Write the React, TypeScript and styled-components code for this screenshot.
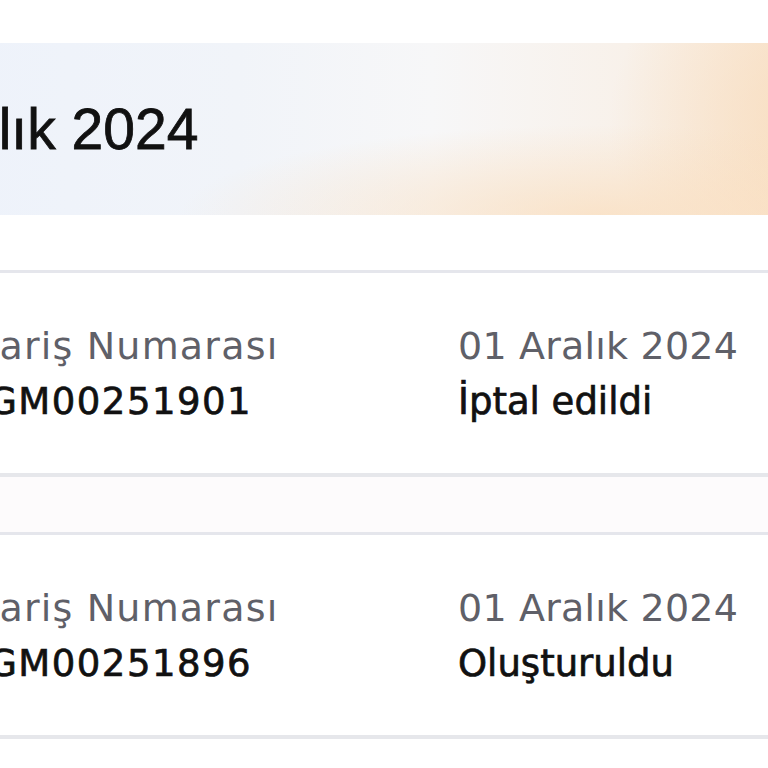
import React from 'react';
import styled, { createGlobalStyle } from 'styled-components';

const GlobalStyle = createGlobalStyle`
  html, body {
    margin: 0;
    padding: 0;
    background: #ffffff;
    overflow: hidden;
  }
  body {
    font-family: "DejaVu Sans", "Liberation Sans", sans-serif;
  }
`;

const Page = styled.div`
  width: 968px;
  margin-left: -100px;
  padding-top: 43px;
`;

const Banner = styled.div`
  height: 172px;
  display: flex;
  align-items: center;
  padding-left: 10px;
  background:
    radial-gradient(ellipse 420px 90px at 700px 172px, rgba(250, 222, 190, 0.75), rgba(250, 222, 190, 0) 100%),
    radial-gradient(ellipse 260px 200px at 968px 80px, rgba(249, 218, 184, 0.9), rgba(249, 218, 184, 0) 100%),
    linear-gradient(90deg, #edf2fb 0%, #f1f4f9 35%, #f7f7f8 55%, #f8f1ea 75%, #f9e4cd 100%);
`;

const BannerTitle = styled.h1`
  margin: 0;
  font-family: "Liberation Sans", Arial, sans-serif;
  font-size: 57px;
  font-weight: 400;
  color: #111111;
  -webkit-text-stroke: 0.8px #111111;
`;

const OrderList = styled.div`
  display: flex;
  flex-direction: column;
  gap: 55px;
  margin-top: 55px;
  background: #fdfbfc;
`;

const OrderCard = styled.div`
  display: grid;
  grid-template-columns: 558px 1fr;
  align-items: center;
  height: 200px;
  background: #ffffff;
  border-top: 3px solid #e5e6ec;
  border-bottom: 4px solid #e6e7eb;
`;

const Field = styled.div<{ $indent: number }>`
  display: flex;
  flex-direction: column;
  gap: 10px;
  padding-left: ${p => p.$indent}px;
  margin-top: 2px;
`;

const Label = styled.span<{ $spread?: boolean }>`
  font-size: 38px;
  color: #5f6068;
  line-height: 46px;
  letter-spacing: ${p => (p.$spread ? '1.2px' : '0.2px')};
  white-space: nowrap;
`;

const Value = styled.span<{ $spread?: boolean }>`
  font-size: 37px;
  color: #111111;
  -webkit-text-stroke: 0.7px #111111;
  line-height: 46px;
  letter-spacing: ${p => (p.$spread ? '1.5px' : '0')};
  padding-left: ${p => (p.$spread ? '21px' : '0')};
  white-space: nowrap;
`;

type Order = { number: string; date: string; status: string };

const orders: Order[] = [
  { number: 'GGM00251901', date: '01 Aralık 2024', status: 'İptal edildi' },
  { number: 'GGM00251896', date: '01 Aralık 2024', status: 'Oluşturuldu' },
];

function App() {
  return (
    <Page>
      <GlobalStyle />
      <Banner>
        <BannerTitle>Aralık 2024</BannerTitle>
      </Banner>
      <OrderList>
        {orders.map(o => (
          <OrderCard key={o.number}>
            <Field $indent={37}>
              <Label $spread>Sipariş Numarası</Label>
              <Value $spread>{o.number}</Value>
            </Field>
            <Field $indent={0}>
              <Label>{o.date}</Label>
              <Value>{o.status}</Value>
            </Field>
          </OrderCard>
        ))}
      </OrderList>
    </Page>
  );
}

export default App;
